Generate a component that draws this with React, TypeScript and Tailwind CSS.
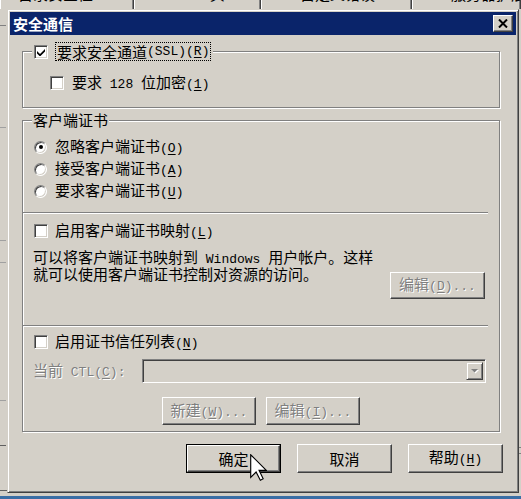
import React from "react";

const F = "font-['Noto_Sans_CJK_SC',sans-serif]";

function M({ children }: { children: React.ReactNode }) {
  return <span className="font-['Liberation_Mono',monospace] text-[13px]">{children}</span>;
}

function U({ c }: { c: string }) {
  return (
    <M>
      (<u className="underline underline-offset-[2px]">{c}</u>)
    </M>
  );
}

const DIS = "text-[#808080] [text-shadow:1px_1px_0_#fff]";

function CheckBox({ checked = false }: { checked?: boolean }) {
  return (
    <span className="inline-flex w-[14px] h-[14px] shrink-0 items-center justify-center bg-white border border-t-[#808080] border-l-[#808080] border-r-white border-b-white shadow-[inset_1px_1px_0_#404040,inset_-1px_-1px_0_#d4d0c8]">
      {checked && (
        <svg width="8" height="8" viewBox="0 0 8 8">
          <path d="M0 3 L3 6 L8 1 L8 3.5 L3 8.5 L0 5.5 Z" fill="#000" />
        </svg>
      )}
    </span>
  );
}

function Radio({ checked = false }: { checked?: boolean }) {
  return (
    <span className="inline-flex w-[13px] h-[13px] shrink-0 rounded-full items-center justify-center bg-white border border-t-[#808080] border-l-[#808080] border-r-white border-b-white shadow-[inset_1px_1px_0_#404040,inset_-1px_-1px_0_#d4d0c8]">
      {checked && <span className="w-[4px] h-[4px] rounded-full bg-black" />}
    </span>
  );
}

function Bevel({ className, children, disabled = false }: { className: string; children: React.ReactNode; disabled?: boolean }) {
  return (
    <div
      className={`${className} shrink-0 flex items-center justify-center border border-t-white border-l-white border-r-[#404040] border-b-[#404040] shadow-[inset_-1px_-1px_0_#808080] ${disabled ? DIS : "text-black"}`}
    >
      {children}
    </div>
  );
}

function Tab({ className, label }: { className: string; label: string }) {
  return (
    <div className={`${className} h-[9px] shrink-0 overflow-hidden border-l border-l-white border-r border-r-[#404040] shadow-[inset_-1px_0_0_#808080]`}>
      <span className="block -mt-[14px] leading-[15px] text-[15px] whitespace-nowrap">{label}</span>
    </div>
  );
}

export default function App() {
  return (
    <div className={`relative w-[521px] h-[499px] overflow-hidden bg-[#d4d0c8] flex flex-col text-[15px] leading-[18px] text-black ${F}`}>
      {/* background property sheet tabs */}
      <div className="h-[9px] shrink-0 flex">
        <Tab className="w-[134px] pl-[17px]" label="目录安全性" />
        <Tab className="w-[127px] pl-[33px]" label="HTTP 头" />
        <Tab className="w-[151px] pl-[38px]" label="自定义错误" />
        <Tab className="w-[109px] pl-[38px]" label="服务器扩展" />
      </div>

      <div className="h-[484px] shrink-0 flex">
        {/* left background strip */}
        <div className="w-[7px] shrink-0 flex flex-col">
          <div className="mt-[16px] h-px w-[6px] bg-[#808080]" />
          <div className="mt-[101px] h-px w-[6px] bg-[#a0a0a0]" />
          <div className="mt-[112px] h-px w-[6px] bg-[#a0a0a0]" />
          <div className="mt-[21px] h-px w-[6px] bg-[#a0a0a0]" />
          <div className="mt-[137px] h-px w-[6px] bg-[#a0a0a0]" />
          <div className="mt-[44px] h-px w-[6px] bg-[#606060]" />
          <div className="mt-[44px] h-px w-[7px] bg-[#606060]" />
        </div>

        {/* dialog */}
        <div className="w-[512px] h-[484px] shrink-0 flex flex-col p-[2px] border border-t-[#d4d0c8] border-l-[#d4d0c8] border-r-[#404040] border-b-[#404040] shadow-[inset_1px_1px_0_#fff,inset_-1px_-1px_0_#808080]">
          {/* title bar */}
          <div className="h-[23px] shrink-0 bg-[#0a246a] flex items-start pl-[3px] pr-[3px]">
            <span className="mt-[2px] text-white font-bold text-[15px] leading-[19px]">安全通信</span>
            <div className="ml-auto mt-[3px] w-[20px] h-[17px] bg-[#d4d0c8] flex items-center justify-center border border-t-white border-l-white border-r-[#404040] border-b-[#404040] shadow-[inset_-1px_-1px_0_#808080]">
              <svg width="10" height="9" viewBox="0 0 10 9">
                <path d="M1 0.5 L9 8.5 M9 0.5 L1 8.5" stroke="#000" strokeWidth="2" />
              </svg>
            </div>
          </div>

          {/* group 1 */}
          <fieldset className="ml-[12px] mt-[7px] w-[478px] border border-[#808080] shadow-[inset_1px_1px_0_#fff,1px_1px_0_#fff] pb-[15px]">
            <legend className="ml-[9px] px-[2px] bg-[#d4d0c8]">
              <div className="h-[19px] flex items-center">
                <CheckBox checked />
                <span className="ml-[7px] h-[19px] px-[1px] flex items-center border border-dotted border-black">
                  要求安全通道<M>(SSL)</M>
                  <U c="R" />
                </span>
              </div>
            </legend>
            <div className="mt-[13px] ml-[27px] h-[18px] flex items-center">
              <CheckBox />
              <span className="ml-[8px]">
                要求<M> 128 </M>位加密<U c="1" />
              </span>
            </div>
          </fieldset>

          {/* group 2 */}
          <fieldset className="ml-[12px] mt-[3px] w-[478px] border border-[#808080] shadow-[inset_1px_1px_0_#fff,1px_1px_0_#fff] pb-[6px]">
            <legend className="ml-[9px] px-[1px] bg-[#d4d0c8] leading-[18px]">客户端证书</legend>
            <div className="mt-[7px] flex flex-col">
              <div className="h-[22px] ml-[11px] flex items-center">
                <Radio checked />
                <span className="ml-[8px]">
                  忽略客户端证书<U c="O" />
                </span>
              </div>
              <div className="h-[22px] ml-[11px] flex items-center">
                <Radio />
                <span className="ml-[8px]">
                  接受客户端证书<U c="A" />
                </span>
              </div>
              <div className="h-[22px] ml-[11px] flex items-center">
                <Radio />
                <span className="ml-[8px]">
                  要求客户端证书<U c="U" />
                </span>
              </div>
            </div>

            <div className="mt-[10px] w-[465px] h-[2px] border-t border-t-[#808080] border-b border-b-white" />

            <div className="mt-[8px] ml-[11px] h-[18px] flex items-center">
              <CheckBox />
              <span className="ml-[7px]">
                启用客户端证书映射<U c="L" />
              </span>
            </div>

            <div className="mt-[10px] flex items-start">
              <p className="ml-[10px] leading-[14px] whitespace-nowrap">
                可以将客户端证书映射到<M> Windows </M>用户帐户。这样
                <br />
                就可以使用客户端证书控制对资源的访问。
              </p>
              <Bevel className="ml-auto mr-[14px] mt-[22px] w-[95px] h-[27px]" disabled>
                <span>
                  编辑<U c="D" />
                  <M>...</M>
                </span>
              </Bevel>
            </div>

            <div className="mt-[26px] w-[465px] h-[2px] border-t border-t-[#808080] border-b border-b-white" />

            <div className="mt-[6px] ml-[11px] h-[18px] flex items-center">
              <CheckBox />
              <span className="ml-[7px]">
                启用证书信任列表<U c="N" />
              </span>
            </div>

            <div className="mt-[8px] h-[24px] flex items-center">
              <span className={`ml-[10px] ${DIS}`}>
                当前<M> CTL</M>
                <U c="C" />
                <M>:</M>
              </span>
              <div className="ml-auto mr-[13px] w-[344px] h-[24px] flex justify-end items-stretch p-[2px] bg-[#d4d0c8] border border-t-[#808080] border-l-[#808080] border-r-white border-b-white shadow-[inset_1px_1px_0_#404040,inset_-1px_-1px_0_#d4d0c8]">
                <div className="w-[17px] flex items-center justify-center bg-[#d4d0c8] border border-t-[#d4d0c8] border-l-[#d4d0c8] border-r-[#404040] border-b-[#404040] shadow-[inset_1px_1px_0_#fff,inset_-1px_-1px_0_#808080]">
                  <svg width="8" height="5" viewBox="0 0 8 5">
                    <path d="M1 1 H8 L4.5 4.5 Z" fill="#fff" />
                    <path d="M0 0 H7 L3.5 3.5 Z" fill="#808080" />
                  </svg>
                </div>
              </div>
            </div>

            <div className="mt-[14px] ml-[139px] flex gap-[10px]">
              <Bevel className="w-[94px] h-[28px]" disabled>
                <span>
                  新建<U c="W" />
                  <M>...</M>
                </span>
              </Bevel>
              <Bevel className="w-[94px] h-[28px]" disabled>
                <span>
                  编辑<U c="I" />
                  <M>...</M>
                </span>
              </Bevel>
            </div>
          </fieldset>

          {/* bottom buttons */}
          <div className="mt-[12px] mr-[13px] flex justify-end gap-[16px]">
            <div className="w-[95px] h-[29px] shrink-0 border border-black flex">
              <Bevel className="w-full h-full">确定</Bevel>
            </div>
            <Bevel className="w-[95px] h-[29px]">取消</Bevel>
            <Bevel className="w-[95px] h-[29px]">
              <span>
                帮助<U c="H" />
              </span>
            </Bevel>
          </div>
        </div>

        {/* right background strip */}
        <div className="flex-1 flex flex-col">
          <div className="mt-[438px] h-px bg-[#808080]" />
          <div className="mt-[5px] h-px bg-[#808080]" />
        </div>
      </div>

      <div className="h-[3px] shrink-0" />
      <div className="h-[3px] shrink-0 bg-[#3a6ea5]" />

      {/* mouse pointer */}
      <svg className="absolute left-[250px] top-[454px]" width="17" height="27" viewBox="0 0 12 19">
        <path
          d="M0.5 0.5 L0.5 16.5 L4.3 12.7 L7.3 18.5 L9.3 17.5 L6.4 11.5 L11.5 11.5 Z"
          fill="#fff"
          stroke="#000"
          strokeWidth="0.8"
          strokeLinejoin="miter"
        />
      </svg>
    </div>
  );
}
